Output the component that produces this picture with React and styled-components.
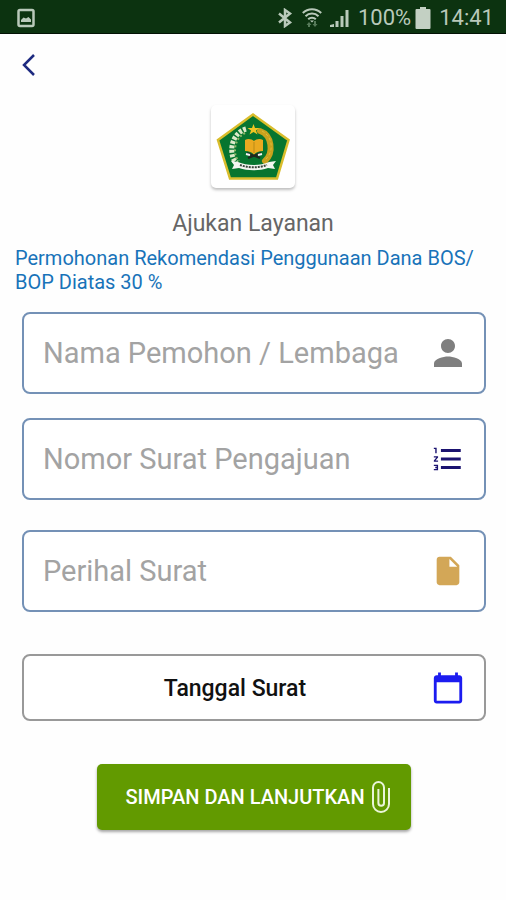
import styled, { createGlobalStyle } from 'styled-components';
import {
    MdCalendarToday,
    MdFormatListNumbered,
    MdInsertDriveFile,
    MdPerson,
} from 'react-icons/md';

const fields = [
    {
        id: 'pemohon',
        label: 'Nama Pemohon / Lembaga',
        icon: MdPerson,
        color: '#7f7f7f',
        size: 42,
        gap: 24,
    },
    {
        id: 'nomor',
        label: 'Nomor Surat Pengajuan',
        icon: MdFormatListNumbered,
        color: '#1a1270',
        size: 34,
        gap: 30,
    },
    {
        id: 'perihal',
        label: 'Perihal Surat',
        icon: MdInsertDriveFile,
        color: '#d3a757',
        size: 34,
        gap: 42,
    },
];

const PictureIcon = () => (
    <svg width="18" height="20" viewBox="0 0 18 20" aria-hidden="true">
        <rect
            x="1.5"
            y="2"
            width="15"
            height="16"
            rx="1.5"
            fill="none"
            stroke="#b9c9ba"
            strokeWidth="2.5"
        />
        <path d="M4 14v-2l2.5-2.5L9 10.5l2.500-1.500L14 11.500V14z" fill="#b9c9ba" />
    </svg>
);

const BluetoothIcon = () => (
    <svg width="18" height="20" viewBox="0 0 18 20" aria-hidden="true">
        <path
            d="M3 5.500l11 9L9 18V2l5 3.500-11 9"
            fill="none"
            stroke="#b9c9ba"
            strokeWidth="2.500"
        />
    </svg>
);

const WifiIcon = () => (
    <svg width="20" height="20" viewBox="0 0 20 20" aria-hidden="true">
        <g fill="none" stroke="#b9c9ba" strokeWidth="2">
            <path d="M.8 5a13 13 0 0 1 18.400 0" />
            <path d="M3.500 8.300a9.200 9.200 0 0 1 13 0" />
            <path d="M6.200 11.300a5.400 5.400 0 0 1 7.600 0" />
        </g>
        <path d="M8 12.500h4l-2 2z" fill="#b9c9ba" />
        <path
            d="M4.500 17l2.500-3 2.500 3H8v2H6v-2zM10.500 16H12v-3h2v3h1.500L13 19z"
            fill="#567a59"
        />
    </svg>
);

const SignalIcon = () => (
    <svg width="20" height="20" viewBox="0 0 20 20" aria-hidden="true">
        <path
            d="M0 19v-2l4-1v3zM5.500 19v-6h3v6zM10.500 19V8h3v11zM15.500 19V2h3v17z"
            fill="#b9c9ba"
        />
    </svg>
);

const BatteryIcon = () => (
    <svg width="16" height="22" viewBox="0 0 16 22" aria-hidden="true">
        <path
            d="M5 0h6v2h3.500a1 1 0 0 1 1 1v18a1 1 0 0 1-1 1h-13a1 1 0 0 1-1-1V3a1 1 0 0 1 1-1H5z"
            fill="#c3d0c3"
        />
    </svg>
);

const BackIcon = () => (
    <svg width="15" height="24" viewBox="0 0 15 24" aria-hidden="true">
        <path
            d="M13 2L3 12l10 10"
            fill="none"
            stroke="#1d2a80"
            strokeWidth="2.500"
        />
    </svg>
);

const ClipIcon = () => (
    <svg width="20" height="32" viewBox="0 0 20 32" aria-hidden="true">
        <path
            d="M18 7v16a8 8 0 0 1-16 0V6.500a5.500 5.500 0 0 1 11 0V22a2.800 2.800 0 0 1-5.600 0V8"
            fill="none"
            stroke="#eaf5d8"
            strokeWidth="2"
        />
    </svg>
);

const Emblem = () => (
    <svg width="76" height="70" viewBox="0 0 76 70" role="img" aria-label="Logo">
        <path
            d="M38 2.500L73.500 28 62 66.500H15L3 28z"
            fill="#07752f"
            stroke="#d9bd2c"
            strokeWidth="2.500"
        />
        {/* rice stalk on the left, cotton on the right */}
        <path
            d="M31 17C20 20 14 33 18 46c1 2 2 4 4 5"
            fill="none"
            stroke="#dce9c9"
            strokeWidth="5"
            strokeDasharray="3 1.500"
        />
        <path
            d="M30 21c-8 4-12 14-9 24 1 2 2 3 3 4"
            fill="none"
            stroke="#8fb768"
            strokeWidth="2"
            strokeDasharray="2 2"
        />
        <path
            d="M45 19c12 4 14 22 5 30"
            fill="none"
            stroke="#c9a21d"
            strokeWidth="6"
            strokeLinecap="round"
        />
        <path
            d="M47 19c11 6 12 20 4 28"
            fill="none"
            stroke="#dcbb3c"
            strokeWidth="1"
            strokeDasharray="3 2"
        />
        <path
            d="M38.500 12l1.500 4h4.500L41 18.500l1.500 4-4-2.500-4 2.500 1.500-4-3.500-2.500H37z"
            fill="#efc522"
        />
        <path
            d="M39 29c-2-2-6-3-9-1v11c4 0 7 1 9 4 2-3 5-4 9-4V28c-3-2-7-1-9 1z"
            fill="#eaa920"
        />
        <path d="M39 30v11" stroke="#b98a17" strokeWidth="1" />
        <path d="M32 41l13 5M46 41l-13 5" stroke="#202820" strokeWidth="2" />
        <path d="M31 42l4 1M47 42l-4 1" stroke="#f5f5f5" strokeWidth="2" />
        <path
            d="M16 49l7 1c9 4 22 4 31 0l7-1-3 4 2 4-7-1c-9 3-20 3-29 0l-7 1 2-4z"
            fill="#f4f6f2"
        />
        <path
            d="M25 53c8 3 19 3 27 0"
            fill="none"
            stroke="#38443a"
            strokeWidth="2"
            strokeDasharray="2 1"
        />
    </svg>
);

const App = () => {
    return (
        <>
            <GlobalStyle />
            <StatusBar>
                <PictureIcon />
                <StatusGroup>
                    <BluetoothIcon />
                    <WifiIcon />
                    <SignalIcon />
                    <Battery>
                        <span>100%</span>
                        <BatteryIcon />
                    </Battery>
                    <span>14:41</span>
                </StatusGroup>
            </StatusBar>
            <Header>
                <BackButton type="button" aria-label="Kembali">
                    <BackIcon />
                </BackButton>
            </Header>
            <Main>
                <LogoCard>
                    <Emblem />
                </LogoCard>
                <Title>Ajukan Layanan</Title>
                <Service>
                    Permohonan Rekomendasi Penggunaan Dana BOS/
                    <wbr />
                    BOP Diatas 30 %
                </Service>
                <Form onSubmit={e => e.preventDefault()}>
                    {fields.map(({ id, label, icon: Icon, color, size, gap }) => (
                        <Field key={id} htmlFor={id} $gap={gap}>
                            <Input
                                id={id}
                                name={id}
                                aria-label={label}
                                placeholder={label}
                            />
                            <IconSlot $color={color}>
                                <Icon size={size} />
                            </IconSlot>
                        </Field>
                    ))}
                    <DateButton type="button">
                        <DateText>Tanggal Surat</DateText>
                        <IconSlot $color="#1c1cf0">
                            <MdCalendarToday size={34} />
                        </IconSlot>
                    </DateButton>
                    <SubmitButton type="submit">
                        Simpan dan Lanjutkan
                        <ClipIcon />
                    </SubmitButton>
                </Form>
            </Main>
        </>
    );
};

export default App;

const GlobalStyle = createGlobalStyle`
    * {
        box-sizing: border-box;
    }

    body {
        margin: 0;
        background: #fefefe;
        font-family: Roboto, 'Liberation Sans', sans-serif;
    }

    button,
    input {
        font-family: inherit;
    }

    svg {
        display: block;
        flex-shrink: 0;
    }
`;

const StatusBar = styled.div`
    display: flex;
    align-items: center;
    justify-content: space-between;
    height: 34px;
    padding: 2px 12px 0 17px;
    border-bottom: 1px solid #031205;
    background: #0c3310;
    color: #b9c9ba;
    font-size: 22px;
    line-height: 30px;
`;

const StatusGroup = styled.div`
    display: flex;
    align-items: center;
    gap: 8px;
`;

const Battery = styled.div`
    display: flex;
    align-items: center;
    gap: 4px;
`;

const Header = styled.header`
    display: flex;
    padding: 19px 21px 0;
`;

const BackButton = styled.button`
    padding: 0;
    border: none;
    background: none;
    cursor: pointer;
`;

const Main = styled.main`
    padding-top: 28px;
`;

const LogoCard = styled.div`
    display: flex;
    align-items: center;
    justify-content: center;
    width: 84px;
    height: 83px;
    margin: 0 auto;
    border-radius: 5px;
    background: #fff;
    box-shadow: 0 2px 3px rgba(0, 0, 0, 0.25);
`;

const Title = styled.h1`
    margin: 20px 0 0;
    color: #666;
    font-weight: 400;
    font-size: 23px;
    line-height: 32px;
    text-align: center;
`;

const Service = styled.p`
    margin: 6px 15px 0;
    color: #1873b9;
    font-size: 20px;
    line-height: 24px;
`;

const Form = styled.form`
    display: flex;
    flex-direction: column;
    padding: 18px 20px 40px 22px;
`;

const Field = styled.label`
    display: flex;
    align-items: center;
    height: 82px;
    margin-bottom: ${({ $gap }) => $gap}px;
    padding: 0 15px 0 19px;
    border: 2px solid #7491b6;
    border-radius: 8px;
    background: #fff;
`;

const Input = styled.input`
    flex: 1;
    min-width: 0;
    padding: 0;
    border: none;
    outline: none;
    background: transparent;
    color: #333;
    font-size: 29px;
    line-height: 36px;

    &::placeholder {
        color: #a3a3a3;
        opacity: 1;
    }
`;

const IconSlot = styled.span`
    display: flex;
    align-items: center;
    justify-content: center;
    width: 42px;
    color: ${({ $color }) => $color};
`;

const DateButton = styled.button`
    display: flex;
    align-items: center;
    height: 67px;
    padding: 0 15px 0 19px;
    border: 2px solid #999;
    border-radius: 8px;
    background: #fff;
    color: #111;
    cursor: pointer;
`;

const DateText = styled.span`
    flex: 1;
    padding-top: 2px;
    font-weight: 500;
    font-size: 23px;
    line-height: 30px;
`;

const SubmitButton = styled.button`
    display: flex;
    align-items: center;
    align-self: center;
    gap: 6px;
    height: 66px;
    margin-top: 43px;
    padding: 0 20px 0 28px;
    border: none;
    border-radius: 5px;
    background: #629a00;
    box-shadow: 0 2px 3px rgba(0, 0, 0, 0.35);
    color: #fff;
    font-weight: 500;
    font-size: 20px;
    line-height: 24px;
    text-transform: uppercase;
    cursor: pointer;
`;
